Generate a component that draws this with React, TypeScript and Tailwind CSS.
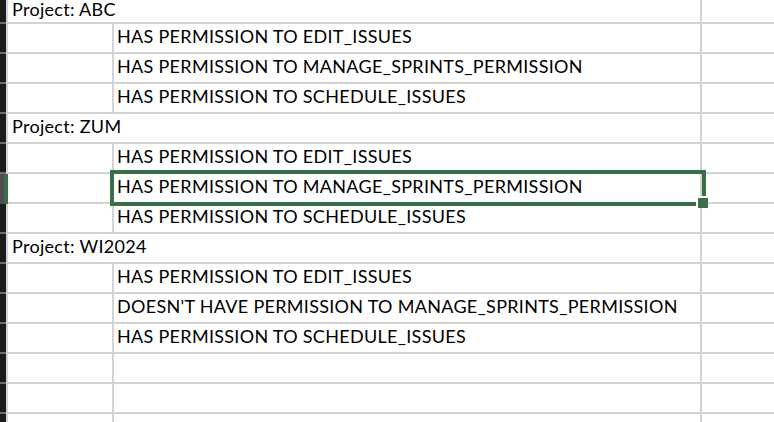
const rows: { a?: string; b?: string }[] = [
  { a: "Project: ABC" },
  { b: "HAS PERMISSION TO EDIT_ISSUES" },
  { b: "HAS PERMISSION TO MANAGE_SPRINTS_PERMISSION" },
  { b: "HAS PERMISSION TO SCHEDULE_ISSUES" },
  { a: "Project: ZUM" },
  { b: "HAS PERMISSION TO EDIT_ISSUES" },
  { b: "HAS PERMISSION TO MANAGE_SPRINTS_PERMISSION" },
  { b: "HAS PERMISSION TO SCHEDULE_ISSUES" },
  { a: "Project: WI2024" },
  { b: "HAS PERMISSION TO EDIT_ISSUES" },
  { b: "DOESN'T HAVE PERMISSION TO MANAGE_SPRINTS_PERMISSION" },
  { b: "HAS PERMISSION TO SCHEDULE_ISSUES" },
  {},
  {},
  {},
];

const SELECTED = 6;

function Row({ a, b, selected, first }: { a?: string; b?: string; selected: boolean; first: boolean }) {
  return (
    <div className="flex h-[30px] shrink-0">
      {/* row header strip */}
      {selected ? (
        <div className="flex w-[8px] shrink-0">
          <div className="w-[4px] bg-[#4f4f4f]" />
          <div className="w-[4px] bg-[#3a6e48]" />
        </div>
      ) : (
        <div className="w-[8px] shrink-0 flex">
          <div className="w-[6px] bg-[#1b1b1b] border-b-2 border-[#6e6e6e]" />
          <div className="w-[2px] bg-[#d4d4d4]" />
        </div>
      )}
      <div
        className={`w-[106px] shrink-0 border-b-2 border-[#d4d4d4] ${a ? "" : "border-r-2"} flex items-end pl-[4px] ${
          first ? "pb-[5px]" : "pb-[6px]"
        }`}
      >
        {a && (
          <span className={`whitespace-nowrap ${first ? "leading-[16px]" : "leading-[20px]"}`}>{a}</span>
        )}
      </div>
      <div className="w-[588px] shrink-0 border-b-2 border-r-2 border-[#d4d4d4] flex items-end pl-[3px] pb-[6px]">
        {b && <span className="whitespace-nowrap leading-[20px]">{b}</span>}
      </div>
      <div className="flex-1 border-b-2 border-[#d4d4d4]" />
    </div>
  );
}

export default function App() {
  return (
    <div
      className="relative w-[774px] h-[422px] overflow-hidden bg-white text-[18px] tracking-[0.3px] text-black"
      style={{ fontFamily: "Lato, 'Open Sans', sans-serif" }}
    >
      <div className="flex flex-col -mt-[6px]">
        {rows.map((r, i) => (
          <Row key={i} a={r.a} b={r.b} selected={i === SELECTED} first={i === 0} />
        ))}
      </div>

      {/* active cell */}
      <div className="absolute left-[110px] top-[170px] w-[596px] h-[36px] border-4 border-[#3a6e48]" />
      <div className="absolute left-[696px] top-[196px] w-[12px] h-[12px] bg-white">
        <div className="absolute right-0 bottom-0 w-[10px] h-[10px] bg-[#3a6e48]" />
      </div>
    </div>
  );
}
